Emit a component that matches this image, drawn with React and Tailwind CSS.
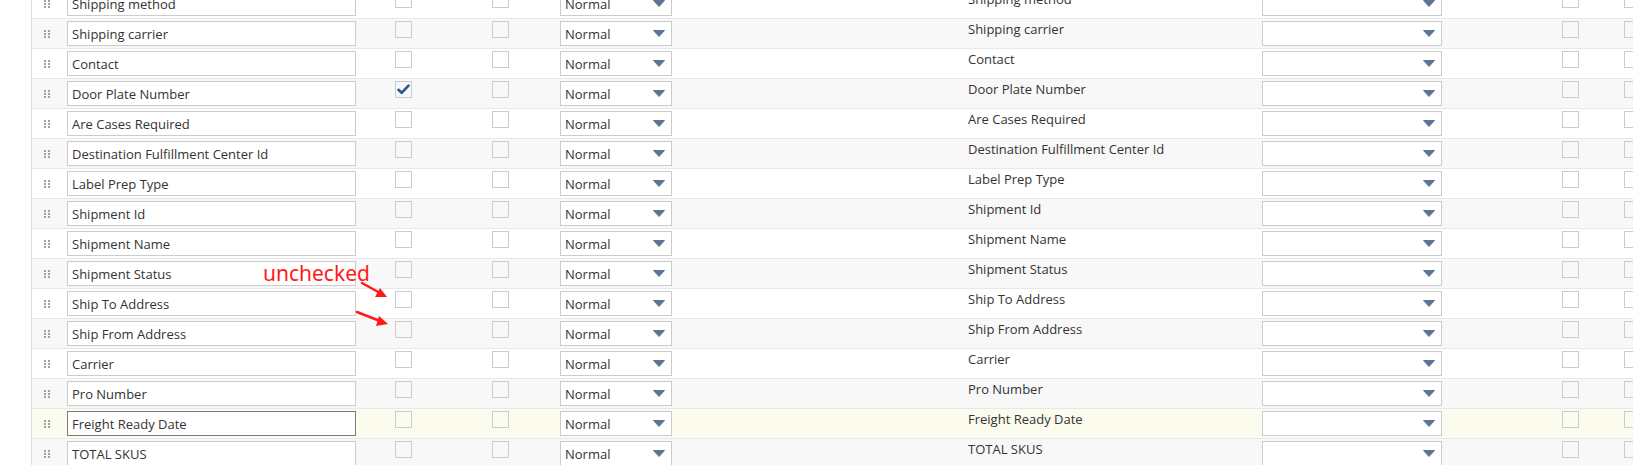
import React from "react";

const rows = [
  "Shipping method",
  "Shipping carrier",
  "Contact",
  "Door Plate Number",
  "Are Cases Required",
  "Destination Fulfillment Center Id",
  "Label Prep Type",
  "Shipment Id",
  "Shipment Name",
  "Shipment Status",
  "Ship To Address",
  "Ship From Address",
  "Carrier",
  "Pro Number",
  "Freight Ready Date",
  "TOTAL SKUS",
];

function Handle() {
  return (
    <div className="grid w-[6px] grid-cols-2 gap-x-[2px] gap-y-[1px]">
      {[0, 1, 2, 3, 4, 5].map((i) => (
        <span key={i} className="block h-[2px] w-[2px] bg-[#a0a0a0]" />
      ))}
    </div>
  );
}

function Arrow() {
  return (
    <svg width="12" height="7" viewBox="0 0 12 7" className="shrink-0">
      <path d="M0.5 0.5 L11.5 0.5 L6 6.5 Z" fill="#5d7594" stroke="#5d7594" strokeWidth="1" strokeLinejoin="round" />
    </svg>
  );
}

function Checkbox({ checked }) {
  return (
    <div className="mt-[2px] flex h-[17px] w-[17px] shrink-0 items-center justify-center border border-[#cccccc] bg-transparent">
      {checked && (
        <svg width="13" height="11" viewBox="0 0 13 11">
          <path d="M1.5 5.8 L4.6 8.8 L11.5 1.6" fill="none" stroke="#23579b" strokeWidth="2.6" strokeLinecap="round" strokeLinejoin="round" />
        </svg>
      )}
    </div>
  );
}

function Row({ label, index }) {
  const hover = label === "Freight Ready Date";
  const bg = hover ? "bg-[#fcfcee]" : index % 2 === 1 ? "bg-[#f8f8f8]" : "bg-white";
  return (
    <div className={`flex h-[30px] shrink-0 border-b border-[#e8e8e8] ${bg}`}>
      <div className="flex w-[35px] shrink-0 items-center pl-[12px]">
        <Handle />
      </div>
      <div
        className={`mt-[2px] flex h-[25px] w-[289px] shrink-0 items-center border bg-white px-[4px] ${
          hover ? "border-[#7a7a7a]" : "border-[#cccccc]"
        }`}
      >
        <span className="whitespace-nowrap leading-[18px]">{label}</span>
      </div>
      <div className="ml-[39px] shrink-0">
        <Checkbox checked={label === "Door Plate Number"} />
      </div>
      <div className="ml-[80px] shrink-0">
        <Checkbox />
      </div>
      <div className="ml-[51px] mt-[2px] flex h-[25px] w-[112px] shrink-0 items-center justify-between border border-[#cccccc] bg-white pl-[4px] pr-[6px]">
        <span className="leading-[18px]">Normal</span>
        <Arrow />
      </div>
      <div className="ml-[296px] w-[294px] shrink-0 whitespace-nowrap pt-[1px] leading-[18px]">{label}</div>
      <div className="mt-[2px] flex h-[25px] w-[180px] shrink-0 items-center justify-end border border-[#cccccc] bg-white pr-[6px]">
        <Arrow />
      </div>
      <div className="ml-[120px] shrink-0">
        <Checkbox />
      </div>
      <div className="ml-[45px] shrink-0">
        <Checkbox />
      </div>
    </div>
  );
}

export default function App() {
  return (
    <div className="relative h-[465px] w-[1633px] overflow-hidden bg-white font-['Open_Sans',sans-serif] text-[13px] text-[#333333]">
      <div className="ml-[31px] mt-[-11px] flex flex-col border-l border-[#dddddd]">
        {rows.map((r, i) => (
          <Row key={r} label={r} index={i} />
        ))}
      </div>

      <div className="absolute left-[263px] top-[260px] font-['Noto_Sans',sans-serif] text-[21px] leading-[26px] text-[#ff1a1a]">
        unchecked
      </div>
      <svg className="absolute left-[350px] top-[276px]" width="45" height="55" viewBox="0 0 45 55">
        <path d="M12 7 L30 17" stroke="#ff1a1a" strokeWidth="2.5" strokeLinecap="round" />
        <path d="M37 21 L25 21 L30 12 Z" fill="#ff1a1a" />
        <path d="M7 36 L30 45" stroke="#ff1a1a" strokeWidth="2.5" strokeLinecap="round" />
        <path d="M38 48 L26 50 L29 40 Z" fill="#ff1a1a" />
      </svg>
    </div>
  );
}
